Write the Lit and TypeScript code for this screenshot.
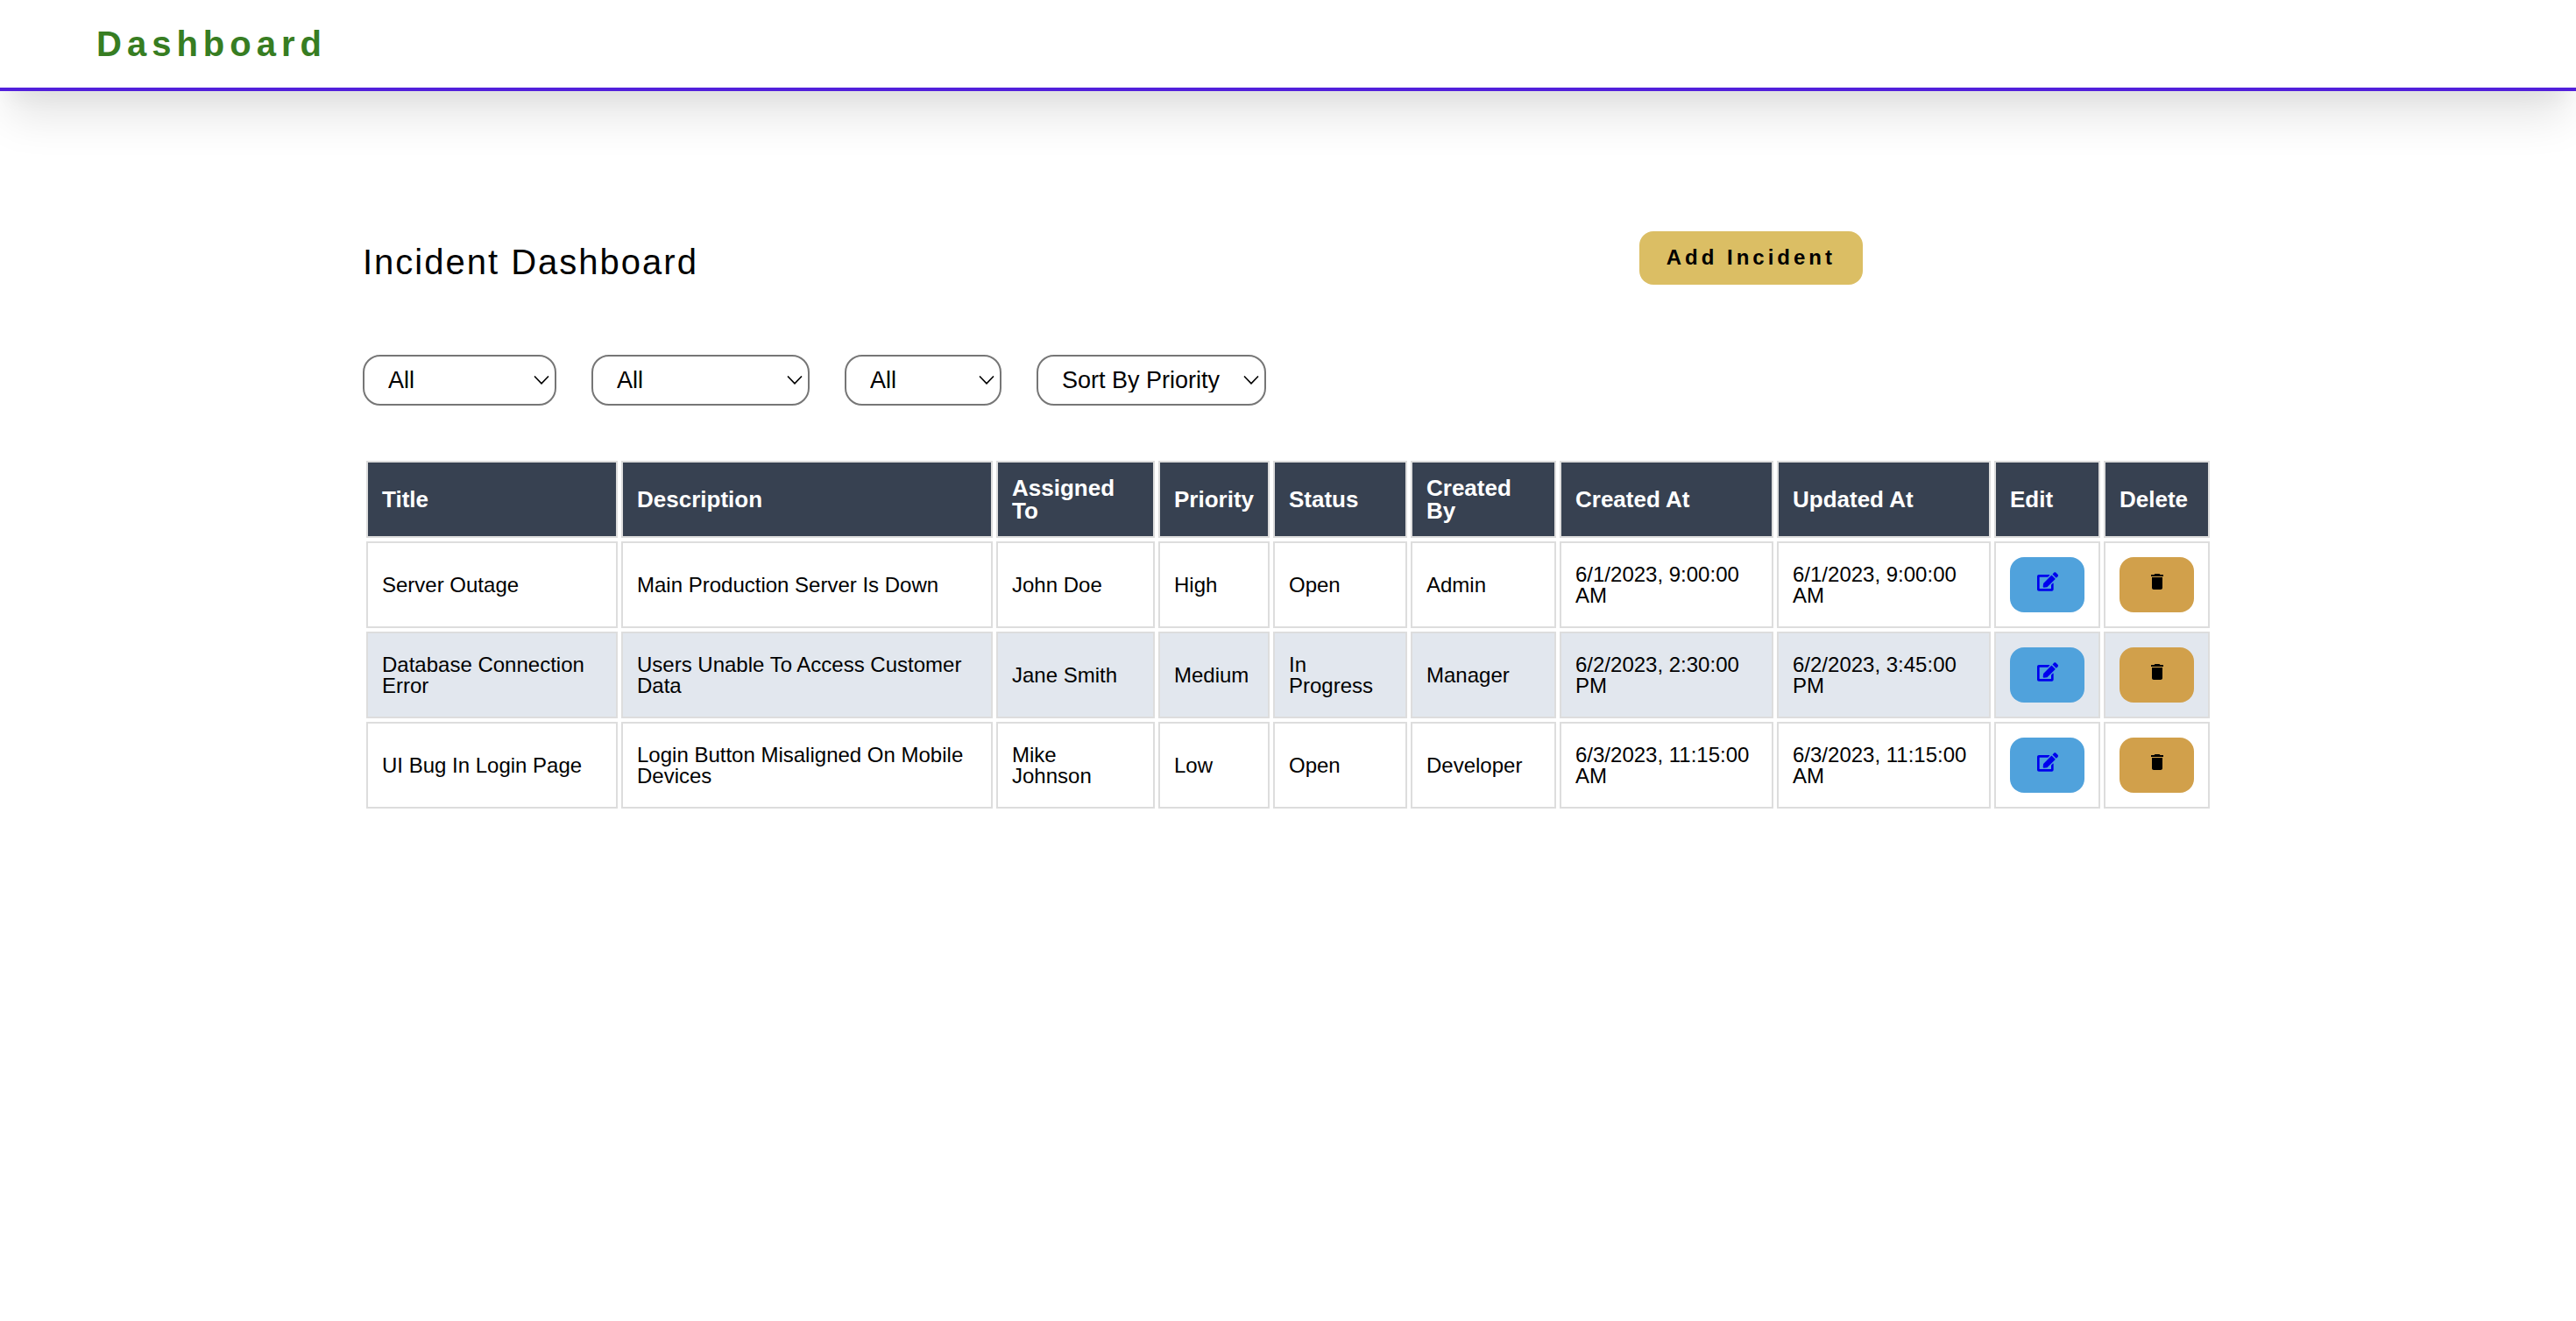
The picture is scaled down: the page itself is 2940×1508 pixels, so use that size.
import { LitElement, html, css, svg } from "lit";
import { customElement, property } from "lit/decorators.js";

interface Incident {
  title: string;
  description: string;
  assignedTo: string;
  priority: string;
  status: string;
  createdBy: string;
  createdAt: string;
  updatedAt: string;
}

const incidents: Incident[] = [
  {
    title: "Server Outage",
    description: "Main Production Server Is Down",
    assignedTo: "John Doe",
    priority: "High",
    status: "Open",
    createdBy: "Admin",
    createdAt: "6/1/2023, 9:00:00 AM",
    updatedAt: "6/1/2023, 9:00:00 AM",
  },
  {
    title: "Database Connection Error",
    description: "Users Unable To Access Customer Data",
    assignedTo: "Jane Smith",
    priority: "Medium",
    status: "In Progress",
    createdBy: "Manager",
    createdAt: "6/2/2023, 2:30:00 PM",
    updatedAt: "6/2/2023, 3:45:00 PM",
  },
  {
    title: "UI Bug In Login Page",
    description: "Login Button Misaligned On Mobile Devices",
    assignedTo: "Mike Johnson",
    priority: "Low",
    status: "Open",
    createdBy: "Developer",
    createdAt: "6/3/2023, 11:15:00 AM",
    updatedAt: "6/3/2023, 11:15:00 AM",
  },
];

const columns = [
  { label: "Title", name: "title" },
  { label: "Description", name: "description" },
  { label: "Assigned To", name: "assigned" },
  { label: "Priority", name: "priority" },
  { label: "Status", name: "status" },
  { label: "Created By", name: "creator" },
  { label: "Created At", name: "created" },
  { label: "Updated At", name: "updated" },
  { label: "Edit", name: "edit" },
  { label: "Delete", name: "delete" },
];

const editIcon = html`<svg class="icon" viewBox="0 0 576 512" aria-hidden="true">
  ${svg`<path d="M402.6 83.2l90.2 90.2c3.8 3.8 3.8 10 0 13.8L274.4 405.6l-92.8 10.3c-12.4 1.4-22.9-9.1-21.5-21.5l10.3-92.8L388.8 83.2c3.8-3.8 10-3.8 13.8 0zm162-22.9l-48.8-48.8c-15.2-15.2-39.9-15.2-55.2 0l-35.4 35.4c-3.8 3.8-3.8 10 0 13.8l90.2 90.2c3.8 3.8 10 3.8 13.8 0l35.4-35.4c15.2-15.3 15.2-40 0-55.2zM384 346.2V448H64V128h229.8c3.2 0 6.2-1.3 8.5-3.5l40-40c7.6-7.6 2.2-20.5-8.5-20.5H48C21.5 64 0 85.5 0 112v352c0 26.5 21.5 48 48 48h352c26.5 0 48-21.5 48-48V306.2c0-10.7-12.9-16-20.5-8.5l-40 40c-2.2 2.3-3.5 5.3-3.5 8.5z"/>`}
</svg>`;

const deleteIcon = html`<svg class="icon" viewBox="0 0 24 24" aria-hidden="true">
  ${svg`<path d="M6 19c0 1.1.9 2 2 2h8c1.1 0 2-.9 2-2V7H6v12zM19 4h-3.5l-1-1h-5l-1 1H5v2h14V4z"/>`}
</svg>`;

@customElement("filter-select")
export class FilterSelect extends LitElement {
  @property() label = "";
  @property({ attribute: false }) options: string[] = [];

  static styles = css`
    :host {
      display: grid;
    }
    .select,
    .arrow {
      grid-area: 1 / 1;
    }
    .select {
      appearance: none;
      box-sizing: border-box;
      width: 100%;
      height: 58px;
      margin: 0;
      padding: 0 27px;
      border: 2px solid #767676;
      border-radius: 20px;
      background: #fff;
      color: #000;
      font: 27px/27px "Liberation Sans", Arial, sans-serif;
    }
    .arrow {
      justify-self: end;
      align-self: center;
      width: 18px;
      height: 10px;
      margin-right: 8px;
      fill: none;
      stroke: #000;
      stroke-width: 1.7;
      stroke-linecap: round;
      pointer-events: none;
    }
  `;

  render() {
    return html`
      <select class="select" aria-label=${this.label}>
        ${this.options.map((option) => html`<option>${option}</option>`)}
      </select>
      <svg class="arrow" viewBox="0 0 18 10" aria-hidden="true"><path d="M1.5 1l7.5 7.8L16.5 1" /></svg>
    `;
  }
}

@customElement("app-root")
export class AppRoot extends LitElement {
  static styles = css`
    :host {
      display: block;
      color: #000;
      font-family: "Liberation Sans", Arial, sans-serif;
    }
    .topbar {
      padding: 30px 110px;
      border-bottom: 4px solid #511fdb;
      background: #fff;
      box-shadow: 0 40px 50px -10px rgba(0, 0, 0, 0.1), 0 20px 20px -10px rgba(0, 0, 0, 0.04);
    }
    .brand {
      margin: 0;
      color: #377d22;
      font-size: 40px;
      line-height: 40px;
      font-weight: 700;
      letter-spacing: 6px;
    }
    .content {
      box-sizing: border-box;
      max-width: 2112px;
      margin: 0 auto;
      padding: 160px 0;
    }
    .heading {
      display: flex;
      align-items: flex-start;
      justify-content: space-between;
      padding-right: 400px;
    }
    .title {
      margin: 0;
      padding-top: 15px;
      font-size: 40px;
      line-height: 40px;
      font-weight: 400;
      letter-spacing: 2px;
    }
    .add {
      padding: 18px 31px 19px;
      border: 0;
      border-radius: 16px;
      background: #dbbe64;
      color: #000;
      font: 700 24px/24px "Liberation Sans", Arial, sans-serif;
      letter-spacing: 4px;
    }
    .filters {
      display: flex;
      gap: 40px;
      margin-top: 80px;
    }
    .filter-status {
      width: 221px;
    }
    .filter-priority {
      width: 249px;
    }
    .filter-person {
      width: 179px;
    }
    .filter-sort {
      width: 262px;
    }
    .incidents {
      width: 100%;
      margin-top: 59px;
      table-layout: fixed;
      border-collapse: separate;
      border-spacing: 4px;
    }
    .head,
    .cell {
      box-sizing: border-box;
      padding: 16px;
      border: 2px solid #ddd;
      text-align: left;
      vertical-align: middle;
    }
    .head {
      background: #374151;
      color: #fff;
      font-size: 26px;
      line-height: 26px;
      font-weight: 700;
    }
    .cell {
      font-size: 24px;
      line-height: 24px;
    }
    .row:nth-child(even) {
      background: #e2e7ee;
    }
    .col-title {
      width: 287px;
    }
    .col-description {
      width: 424px;
    }
    .col-assigned {
      width: 181px;
    }
    .col-priority {
      width: 127px;
    }
    .col-status {
      width: 153px;
    }
    .col-creator {
      width: 166px;
    }
    .col-created,
    .col-updated {
      width: 244px;
    }
    .col-edit,
    .col-delete {
      width: 121px;
    }
    .action {
      box-sizing: border-box;
      display: flex;
      justify-content: center;
      width: 100%;
      padding: 16px 16px 23px;
      border: 0;
      border-radius: 16px;
    }
    .edit {
      background: #50a2dc;
      color: #0000ee;
    }
    .delete {
      background: #d1a04b;
      color: #000;
    }
    .icon {
      display: block;
      width: 24px;
      height: 24px;
      fill: currentColor;
    }
  `;

  private renderRow(item: Incident) {
    return html`
      <tr class="row">
        <td class="cell">${item.title}</td>
        <td class="cell">${item.description}</td>
        <td class="cell">${item.assignedTo}</td>
        <td class="cell">${item.priority}</td>
        <td class="cell">${item.status}</td>
        <td class="cell">${item.createdBy}</td>
        <td class="cell">${item.createdAt}</td>
        <td class="cell">${item.updatedAt}</td>
        <td class="cell">
          <a class="action edit" href="#edit" aria-label="Edit ${item.title}">${editIcon}</a>
        </td>
        <td class="cell">
          <button class="action delete" type="button" aria-label="Delete ${item.title}">${deleteIcon}</button>
        </td>
      </tr>
    `;
  }

  render() {
    return html`
      <header class="topbar">
        <h1 class="brand">Dashboard</h1>
      </header>
      <main class="content">
        <div class="heading">
          <h2 class="title">Incident Dashboard</h2>
          <button class="add" type="button">Add Incident</button>
        </div>
        <div class="filters">
          <filter-select class="filter-status" label="Status" .options=${["All", "Open", "In Progress"]}></filter-select>
          <filter-select class="filter-priority" label="Assigned To" .options=${["All", "John Doe", "Jane Smith", "Mike Johnson"]}></filter-select>
          <filter-select class="filter-person" label="Priority" .options=${["All", "High", "Medium", "Low"]}></filter-select>
          <filter-select class="filter-sort" label="Sort" .options=${["Sort By Priority", "Sort By Status"]}></filter-select>
        </div>
        <table class="incidents">
          <thead>
            <tr>
              ${columns.map((column) => html`<th class="head col-${column.name}" scope="col">${column.label}</th>`)}
            </tr>
          </thead>
          <tbody>
            ${incidents.map((item) => this.renderRow(item))}
          </tbody>
        </table>
      </main>
    `;
  }
}
